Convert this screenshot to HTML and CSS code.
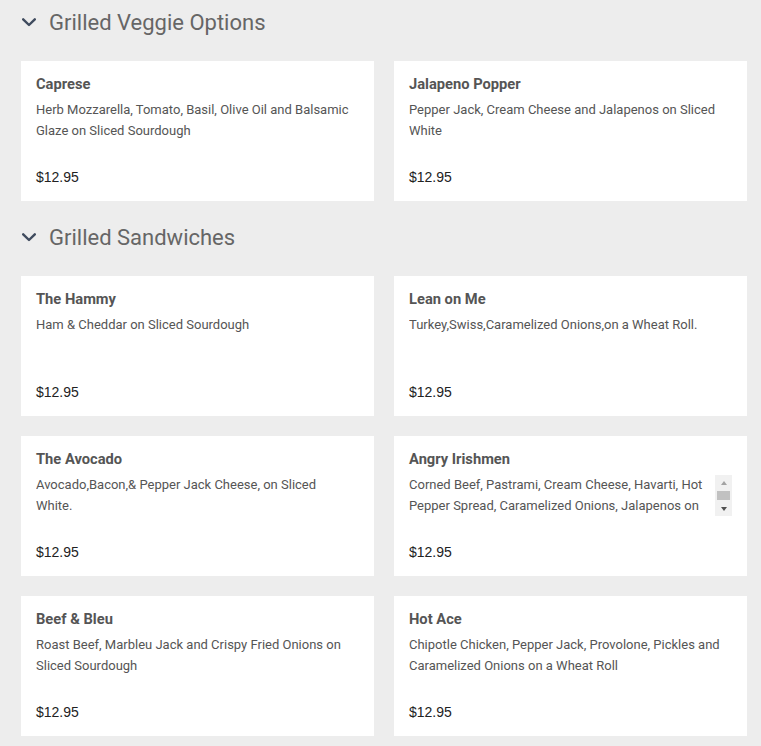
FILE: index.html
```html
<!DOCTYPE html>
<html>
<head>
<meta charset="utf-8">
<link rel="stylesheet" href="styles.css">
</head>
<body>
<section class="section">
  <h2 class="section-title">
    <svg class="chev" width="14" height="9" viewBox="0 0 14 9"><path d="M1.2 1.3 L7 7 L12.8 1.3" fill="none" stroke="#3f4b5e" stroke-width="2.4" stroke-linecap="round" stroke-linejoin="round"/></svg>
    <span>Grilled Veggie Options</span>
  </h2>
  <div class="grid">
    <div class="card">
      <div class="name">Caprese</div>
      <div class="desc">Herb Mozzarella, Tomato, Basil, Olive Oil and Balsamic Glaze on Sliced Sourdough</div>
      <div class="price">$12.95</div>
    </div>
    <div class="card">
      <div class="name">Jalapeno Popper</div>
      <div class="desc">Pepper Jack, Cream Cheese and Jalapenos on Sliced White</div>
      <div class="price">$12.95</div>
    </div>
  </div>
</section>
<section class="section">
  <h2 class="section-title">
    <svg class="chev" width="14" height="9" viewBox="0 0 14 9"><path d="M1.2 1.3 L7 7 L12.8 1.3" fill="none" stroke="#3f4b5e" stroke-width="2.4" stroke-linecap="round" stroke-linejoin="round"/></svg>
    <span>Grilled Sandwiches</span>
  </h2>
  <div class="grid">
    <div class="card">
      <div class="name">The Hammy</div>
      <div class="desc">Ham &amp; Cheddar on Sliced Sourdough</div>
      <div class="price">$12.95</div>
    </div>
    <div class="card">
      <div class="name">Lean on Me</div>
      <div class="desc">Turkey,Swiss,Caramelized Onions,on a Wheat Roll.</div>
      <div class="price">$12.95</div>
    </div>
    <div class="card">
      <div class="name">The Avocado</div>
      <div class="desc">Avocado,Bacon,&amp; Pepper Jack Cheese, on Sliced White.</div>
      <div class="price">$12.95</div>
    </div>
    <div class="card">
      <div class="name">Angry Irishmen</div>
      <div class="desc-row">
        <div class="desc scroll">Corned Beef, Pastrami, Cream Cheese, Havarti, Hot Pepper Spread, Caramelized Onions, Jalapenos on Sliced Sourdough</div>
        <div class="sb">
          <div class="sb-btn"><span class="arrow up"></span></div>
          <div class="sb-track"><div class="sb-thumb"></div></div>
          <div class="sb-btn"><span class="arrow down"></span></div>
        </div>
      </div>
      <div class="price">$12.95</div>
    </div>
    <div class="card">
      <div class="name">Beef &amp; Bleu</div>
      <div class="desc">Roast Beef, Marbleu Jack and Crispy Fried Onions on Sliced Sourdough</div>
      <div class="price">$12.95</div>
    </div>
    <div class="card">
      <div class="name">Hot Ace</div>
      <div class="desc">Chipotle Chicken, Pepper Jack, Provolone, Pickles and Caramelized Onions on a Wheat Roll</div>
      <div class="price">$12.95</div>
    </div>
  </div>
</section>
</body>
</html>
```
FILE: styles.css
```css
html, body {
  margin: 0;
  padding: 0;
  background: #ededed;
}
body {
  padding: 0 14px 0 21px;
  font-family: Roboto, "Liberation Sans", sans-serif;
  overflow: hidden;
}
.section + .section {
  margin-top: 14px;
}
.section-title {
  margin: 0 0 17px 0;
  height: 44px;
  display: flex;
  align-items: center;
  gap: 13px;
  font-size: 22px;
  font-weight: 400;
  color: #666;
}
.chev {
  display: block;
  margin-left: 1px;
  margin-top: 1px;
}
.grid {
  display: grid;
  grid-template-columns: 1fr 1fr;
  gap: 20px;
}
.card {
  background: #fff;
  height: 140px;
  box-sizing: border-box;
  padding: 14px 15px 15px 15px;
}
.name {
  font-size: 14.7px;
  font-weight: 700;
  line-height: 18px;
  color: #555;
}
.desc {
  margin-top: 6px;
  padding-right: 8px;
  font-size: 13px;
  line-height: 21px;
  height: 42px;
  color: #555;
  overflow: hidden;
}
.desc-row {
  display: flex;
  align-items: flex-start;
  height: 42px;
  margin-top: 6px;
}
.desc-row .desc {
  margin-top: 0;
  flex: 1;
  padding-right: 0;
}
.sb {
  width: 17px;
  height: 41px;
  margin-top: 1px;
  background: #f1f1f1;
  display: flex;
  flex-direction: column;
}
.sb-btn {
  height: 14px;
  display: flex;
  align-items: center;
  justify-content: center;
}
.arrow {
  width: 0;
  height: 0;
  border-left: 3.5px solid transparent;
  border-right: 3.5px solid transparent;
}
.arrow.up {
  border-bottom: 4px solid #a3a3a3;
  margin-top: 2px;
}
.arrow.down {
  border-top: 4px solid #505050;
  margin-bottom: 1px;
}
.sb-track {
  flex: 1;
  padding: 2px 2px 0 2px;
}
.sb-thumb {
  height: 9px;
  background: #c1c1c1;
}
.price {
  margin-top: 26px;
  font-family: "Liberation Sans", Arial, sans-serif;
  font-size: 14px;
  line-height: 20px;
  color: #222;
}
```
